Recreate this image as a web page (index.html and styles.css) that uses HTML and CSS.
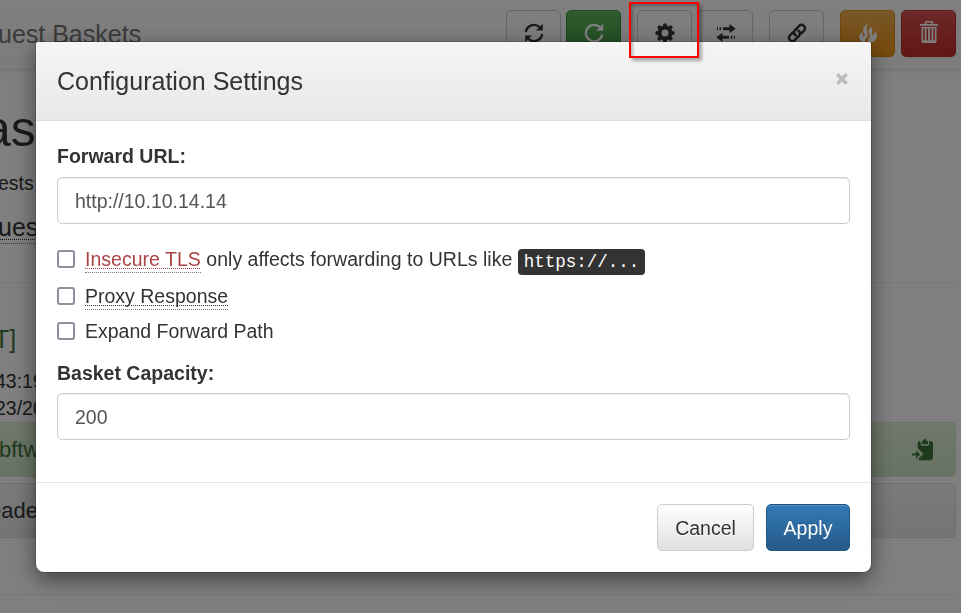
FILE: index.html
```html
<!DOCTYPE html>
<html lang="en">
<head>
<meta charset="utf-8">
<title>Request Baskets</title>
<link rel="stylesheet" href="styles.css">
</head>
<body>
<div class="page">
  <nav class="navbar">
    <span class="brand">uest Baskets</span>
    <div class="toolbar">
      <div class="group sync">
        <span class="tool"><svg class="icon" viewBox="0 0 20 20"><path d="M1.800 9A8.200 8.200 0 0 1 15.600 4.200M18.200 11A8.200 8.200 0 0 1 4.400 15.800" fill="none" stroke="currentColor" stroke-width="2.300"/><path d="M18.800 .8v6.800h-6.800zM1.200 19.200v-6.800H8z" fill="currentColor"/></svg></span>
        <span class="tool success"><svg class="icon" viewBox="0 0 20 20"><path d="M15.800 4.200A8.200 8.200 0 1 0 18.200 11.500" fill="none" stroke="currentColor" stroke-width="2.300"/><path d="M19.200 .8v7h-7z" fill="currentColor"/></svg></span>
      </div>
      <div class="group">
        <span class="tool"><svg class="icon" viewBox="0 0 20 20"><path fill="currentColor" fill-rule="evenodd" d="M8.500.5h3l.5 2.300 1.800.7 2-1.400 2.100 2.100-1.400 2 .7 1.800 2.300.5v3l-2.300.5-.7 1.800 1.400 2-2.100 2.100-2-1.400-1.800.7-.5 2.300h-3L8 17.200l-1.800-.7-2 1.400-2.100-2.100 1.400-2L2.800 12 .5 11.500v-3L2.800 8l.7-1.800-1.400-2 2.100-2.100 2 1.400L8 2.800zM10 6.500a3.500 3.500 0 1 0 0 7 3.500 3.500 0 0 0 0-7z"/></svg></span>
        <span class="tool"><svg class="icon" viewBox="0 0 20 20"><path fill="currentColor" d="M1 4.200h1v3H1zM3.500 4.200h1.700v3H3.500zM7 4.200h6.500V1.100L19.700 5.700l-6.200 4.600V7.200H7zM19 12.800h-1v3h1zM16.500 12.800h-1.700v3h1.700zM13 12.800H6.500V9.700L.3 14.300l6.200 4.600v-3.100H13z"/></svg></span>
      </div>
      <div class="group">
        <span class="tool"><svg class="icon" viewBox="0 0 20 20"><g fill="none" stroke="currentColor" stroke-width="2.500" stroke-linecap="round"><path d="M8.600 12.300C6.600 10.600 6.400 8.900 7.900 7.300l4.300-4.500c3.200-2.800 7.700 1.300 4.900 4.700l-2.800 2.900"/><path d="M11.400 7.700c2 1.700 2.200 3.400.7 5l-4.300 4.500c-3.200 2.800-7.700-1.300-4.900-4.700l2.800-2.900"/></g></svg></span>
      </div>
      <div class="group">
        <span class="tool warning"><svg class="icon" viewBox="0 0 20 20"><path fill="currentColor" d="M10.500 0C5.800 3 4.600 5.600 5.400 8.200c.5 1.800 1.700 3 1.300 4.600-.2.900-1.400 1.100-1.900.2-.6-1.100-.3-2.700-.1-4C2.200 10.100.8 12.400 1.200 14.700c.5 2.900 3 4.700 6.800 5.300-1.100-.8-1.400-1.800-1-3.100.4-1.200 2.100-2.300 2.600-4.200.5-2-.3-3.700-.9-5.600C8 4.700 8.600 2.300 10.500 0z"/><path fill="currentColor" d="M13.400 3.500c-2.800 1.700-3.300 4-2.200 6.500.9 2.100 1 3.800-.3 5.500-1.100 1.500-1.200 3.200.1 4.500 4.400-.2 7.800-3 7.800-6.900 0-2.300-1-3.800-2.600-5.100.4 1.600.3 2.900-.4 3.800-.8.900-2 .3-1.900-.9.100-1.100.6-2 .3-3.800-.2-1.300-.9-2.200-.8-3.600z"/></svg></span>
        <span class="tool danger"><svg class="icon trash" viewBox="0 0 20 22"><path fill="currentColor" fill-rule="evenodd" d="M7 0h6a1.200 1.200 0 0 1 1.200 1.200V3H19v1.800H1V3h4.800V1.200A1.200 1.200 0 0 1 7 0zm.4 1.400V3h5.200V1.400zM2.500 6h15v14.600c0 .8-.6 1.400-1.400 1.400H3.900c-.8 0-1.400-.6-1.400-1.400zm1.600 1.300v12.200h1.600V7.300zm3.400 0v12.200h1.600V7.300zm3.400 0v12.200h1.600V7.300zm3.400 0v12.200h1.600V7.300z"/></svg></span>
      </div>
    </div>
  </nav>
  <main class="content">
    <h1 class="title">as</h1>
    <p class="count">ests</p>
    <p class="lead"><span>ues</span></p>
    <section class="request">
      <h4 class="method">T]</h4>
      <p class="stamp">43:19</p>
      <p class="stamp">23/20</p>
      <div class="panel path"><span>bftw</span>
        <svg class="paste" viewBox="0 0 22 22"><path fill="currentColor" d="M7.300 2.300h1.200v2.500c0 1.200.8 2 2 2h4.600c1.200 0 2-.8 2-2V2.300h1.400c1.500 0 2.500.9 2.500 2.200v14.800l-2 2H8.300c-1.100 0-2-.7-2-1.700l5.200-4.500-5.800-5.800V4.400c0-1.200.6-2.100 1.600-2.100z"/><path fill="currentColor" d="M9.700 2.300h1.300c.3-3 3.400-3 3.700 0H16v2.100c0 .6-.4.900-.9.900h-4.500c-.5 0-.9-.3-.9-.9zM0 14.500h4v-3l4.300 4.100L4 19.500v-3H0z"/></svg>
      </div>
      <div class="panel headers"><span>eade</span></div>
    </section>
  </main>
</div>
<div class="backdrop">
  <form class="modal">
    <header class="modal-header">
      <h4>Configuration Settings</h4>
      <svg class="close" viewBox="0 0 12 12"><path d="M1.300 1.300l9.400 9.400M10.700 1.300l-9.400 9.400" stroke="currentColor" stroke-width="3.400"/></svg>
    </header>
    <div class="modal-body">
      <label class="caption" for="url">Forward URL:</label>
      <input class="field url" id="url" type="text" value="http://10.10.14.14">
      <div class="checks">
        <label class="check"><input type="checkbox"><span class="tls"><abbr class="insecure">Insecure TLS</abbr> only affects forwarding to URLs like <kbd>https://...</kbd></span></label>
        <label class="check"><input type="checkbox"><span><abbr>Proxy Response</abbr></span></label>
        <label class="check last"><input type="checkbox"><span>Expand Forward Path</span></label>
      </div>
      <label class="caption" for="capacity">Basket Capacity:</label>
      <input class="field capacity" id="capacity" type="text" value="200">
    </div>
    <footer class="modal-footer">
      <button class="btn cancel" type="button">Cancel</button>
      <button class="btn apply" type="button">Apply</button>
    </footer>
  </form>
</div>
<div class="highlight"></div>
</body>
</html>
```
FILE: styles.css
```css
* { box-sizing: border-box; }
body {
  margin: 0;
  height: 613px;
  overflow: hidden;
  background: #fff;
  color: #333;
  font: 19.5px/28px "Liberation Sans", Arial, sans-serif;
}
h1, h4, p { margin: 0; font-weight: 400; }
.page { height: 613px; overflow: hidden; }
.navbar {
  display: flex;
  justify-content: space-between;
  height: 70px;
  padding: 10px 5px 0 0;
  border-bottom: 1px solid #e7e7e7;
  background: linear-gradient(#fff, #f8f8f8);
  box-shadow: 0 1px 5px rgba(0, 0, 0, .075);
}
.brand { font-size: 25px; line-height: 48px; color: #777; margin-left: -2px; }
.toolbar { display: flex; gap: 16px; }
.group { display: flex; gap: 6px; }
.group.sync { gap: 5px; }
.tool {
  display: flex;
  justify-content: center;
  width: 55px;
  height: 47px;
  padding-top: 12px;
  border: 1px solid #ccc;
  border-radius: 5px;
  background: linear-gradient(#fff, #f4f4f4);
  box-shadow: inset 0 1px 0 rgba(255, 255, 255, .15), 0 1px 1px rgba(0, 0, 0, .075);
}
.success { color: #fff; border-color: #3e8f3e; background: linear-gradient(#5cb85c, #419641); }
.warning { color: #fff; border-color: #e38d13; background: linear-gradient(#f0ad4e, #eb9316); }
.danger { color: #fff; border-color: #b92c28; background: linear-gradient(#d9534f, #c12e2a); }
.icon { width: 20px; height: 20px; }
.icon.trash { height: 22px; margin-top: -2px; }
.content { padding-right: 5px; }
.title { font-size: 50px; line-height: 56px; margin: 31px 0 0 -17px; }
.count { margin-top: 12px; margin-left: -2px; }
.lead { font-size: 25px; line-height: 36px; margin: 12px 0 0 -2px; }
.lead span {
  border-bottom: 1px dotted #777;
  padding-bottom: 2px;
  text-decoration: underline dotted 1px;
  text-underline-offset: 3px;
}
.request {
  height: 313px;
  margin-top: 37px;
  padding-top: 42px;
  border-top: 1px solid #eee;
  border-bottom: 1px solid #eee;
}
.method { font-size: 25px; color: #3c763d; margin-left: -6px; }
.stamp { line-height: 27px; margin-left: -5px; }
.method + .stamp { margin-top: 15px; }
.panel {
  display: flex;
  justify-content: space-between;
  height: 55px;
  border: 1px solid #ddd;
  border-left: 0;
  border-radius: 0 5px 5px 0;
  font-size: 22px;
  line-height: 54px;
}
.panel span { margin-left: -1px; }
.path { color: #3c763d; border-color: #d0e9c6; background: linear-gradient(#dff0d8, #d0e9c6); }
.headers { margin-top: 6px; background: linear-gradient(#f5f5f5, #e8e8e8); }
.headers span { margin-left: -11px; }
.paste { width: 22px; height: 22px; margin: 16px 21px 0 0; }
.backdrop {
  position: fixed;
  inset: 0;
  padding: 42px 90px 0 36px;
  background: rgba(0, 0, 0, .5);
}
.modal {
  width: 835px;
  height: 530px;
  border-radius: 3px 3px 8px 8px;
  background: #fff;
  box-shadow: 0 7px 21px rgba(0, 0, 0, .5), 0 0 0 1px rgba(0, 0, 0, .15);
}
.modal-header {
  display: flex;
  justify-content: space-between;
  height: 79px;
  padding: 21px 23px 0 21px;
  border-bottom: 1px solid #ddd;
  border-radius: 3px 3px 0 0;
  background: linear-gradient(#f5f5f5, #e8e8e8);
}
.modal-header h4 { font-size: 25px; line-height: 36px; }
.close { width: 12px; height: 12px; margin-top: 10px; color: #bcbcbc; }
.modal-body { height: 361px; padding: 21px; }
.caption { display: block; font-weight: 700; }
.field {
  display: block;
  width: 100%;
  height: 47px;
  margin: 7px 0 0;
  padding: 0 17px;
  border: 1px solid #ccc;
  border-radius: 5px;
  background: #fff;
  box-shadow: inset 0 1px 1px rgba(0, 0, 0, .075);
  color: #555;
  font: inherit;
}
.url { padding-top: 2px; }
.capacity { margin-top: 6px; padding-top: 2px; }
.checks { padding-top: 21px; margin-bottom: 14px; }
.check { display: flex; align-items: center; gap: 10px; height: 28px; margin-bottom: 9px; }
.check.last { margin: -2px 0 0; }
.check input {
  appearance: none;
  width: 18px;
  height: 18px;
  margin: 0;
  border: 2px solid #8f8f9d;
  border-radius: 3px;
  background: #fff;
}
.tls { letter-spacing: .02px; }
abbr {
  border-bottom: 1px dotted #777;
  padding-bottom: 2px;
  text-decoration: underline dotted 1px;
  text-underline-offset: 2px;
}
.insecure { color: #a94442; }
kbd {
  position: relative;
  top: 1px;
  padding: 3px 6px;
  border-radius: 4px;
  background: #333;
  color: #fff;
  font: 17.5px "Liberation Mono", monospace;
  letter-spacing: 0;
}
.modal-footer {
  display: flex;
  justify-content: flex-end;
  gap: 12px;
  padding: 21px;
  border-top: 1px solid #e5e5e5;
}
.btn {
  height: 47px;
  padding: 0;
  border: 1px solid #ccc;
  border-radius: 5px;
  font: inherit;
}
.cancel { width: 97px; color: #333; background: linear-gradient(#fff, #e0e0e0); text-shadow: 0 1px 0 #fff; }
.apply {
  width: 84px;
  color: #fff;
  border-color: #245580;
  background: linear-gradient(#337ab7, #265a88);
  box-shadow: inset 0 1px 0 rgba(255, 255, 255, .15);
  text-shadow: 0 -1px 0 rgba(0, 0, 0, .2);
}
.highlight {
  position: absolute;
  left: 629px;
  top: 2px;
  width: 70px;
  height: 56px;
  border: 2px solid #f00;
  box-shadow: 3px 3px 3px rgba(0, 0, 0, .3), inset 2px 2px 3px rgba(0, 0, 0, .25);
}
```
